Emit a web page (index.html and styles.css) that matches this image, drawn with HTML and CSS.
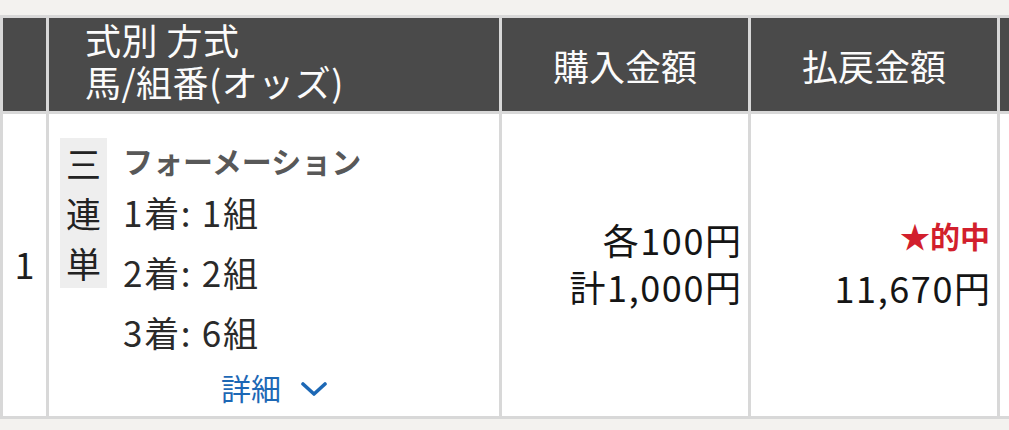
FILE: index.html
```html
<!DOCTYPE html>
<html lang="ja">
<head>
<meta charset="utf-8">
<title>購入内容</title>
<link rel="stylesheet" href="styles.css">
</head>
<body>
<div class="page">
  <div class="ticket-table">
    <div class="th"></div>
    <div class="th th-type">
      <div>式別 方式</div>
      <div>馬/組番(オッズ)</div>
    </div>
    <div class="th th-center">購入金額</div>
    <div class="th th-center">払戻金額</div>
    <div class="th"></div>

    <div class="td td-no">1</div>
    <div class="td td-type">
      <div class="bet">
        <div class="bet-kind"><span>三</span><span>連</span><span>単</span></div>
        <div class="bet-lines">
          <div class="bet-method">フォーメーション</div>
          <div class="bet-line">1着: 1組</div>
          <div class="bet-line">2着: 2組</div>
          <div class="bet-line">3着: 6組</div>
        </div>
      </div>
      <div class="detail">
        <a class="detail-link" href="#">詳細<svg class="chevron" width="26" height="14" viewBox="0 0 26 14"><polyline points="2,2 13,12 24,2" fill="none" stroke="currentColor" stroke-width="3.6" stroke-linecap="round" stroke-linejoin="round"/></svg></a>
      </div>
    </div>
    <div class="td td-amount">
      <div class="amount-line">各100円</div>
      <div class="amount-line">計1,000円</div>
    </div>
    <div class="td td-payout">
      <div class="hit">★的中</div>
      <div class="amount-line payout-line">11,670円</div>
    </div>
    <div class="td"></div>
  </div>
</div>
</body>
</html>
```

FILE: styles.css
```css
html, body {
  margin: 0;
  padding: 0;
  overflow: hidden;
  background: #f3f2ef;
}

body {
  font-family: "Noto Sans CJK JP", "Noto Sans", sans-serif;
  color: #1e1e1e;
}

.page {
  padding-top: 15px;
}

.ticket-table {
  display: grid;
  grid-template-columns: 43px 450px 246px 246px 246px;
  grid-template-rows: 93px 302px;
  gap: 3px;
  padding: 3px;
  width: max-content;
  background: #d8d8d8;
}

.th {
  background: #4a4a4a;
  color: #fbfbfb;
  font-size: 36px;
  line-height: 42px;
}

.th-type {
  padding: 0 0 0 36px;
  letter-spacing: 0.5px;
}

.th-center {
  display: flex;
  align-items: center;
  justify-content: center;
}

.td {
  background: #ffffff;
}

.td-no {
  display: flex;
  align-items: center;
  justify-content: center;
  font-size: 36px;
  padding-bottom: 4px;
}

.td-type {
  padding: 24px 0 0 11px;
}

.bet {
  display: flex;
  align-items: flex-start;
  gap: 16px;
}

.bet-kind {
  display: flex;
  flex-direction: column;
  width: 47px;
  background: #eeeeee;
  font-size: 35px;
  line-height: 50px;
  text-align: center;
  color: #222;
}

.bet-lines {
  display: flex;
  flex-direction: column;
}

.bet-method {
  font-size: 30px;
  font-weight: 700;
  line-height: 44px;
  color: #585858;
}

.bet-line {
  font-size: 35px;
  line-height: 60px;
  letter-spacing: 1.7px;
  color: #2a2a2a;
}

.detail {
  text-align: center;
  padding-right: 11px;
  line-height: 50px;
}

.detail-link {
  display: inline-flex;
  align-items: center;
  gap: 20px;
  font-size: 30px;
  color: #1d68b5;
  text-decoration: none;
}

.chevron {
  margin-top: 3px;
}

.td-amount,
.td-payout {
  display: flex;
  flex-direction: column;
  align-items: flex-end;
  padding: 102px 7px 0 0;
}

.amount-line {
  font-size: 36px;
  line-height: 47px;
  letter-spacing: 1.6px;
  margin-right: -1.6px;
  color: #151515;
}

.hit {
  font-size: 30px;
  font-weight: 700;
  line-height: 38px;
  color: #d21f2d;
}

.payout-line {
  margin-top: 10px;
}
```
